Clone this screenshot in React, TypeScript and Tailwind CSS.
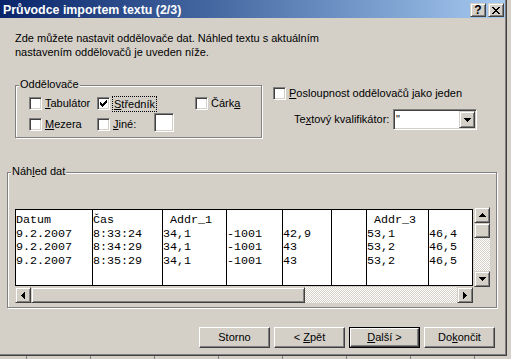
import type { ReactNode } from 'react';

// Win2000 bevels
const raised =
  'border border-t-white border-l-white border-b-[#404040] border-r-[#404040] shadow-[inset_-1px_-1px_0_#808080]';
const raisedSmall =
  'border border-t-[#d4d0c8] border-l-[#d4d0c8] border-b-[#404040] border-r-[#404040] shadow-[inset_1px_1px_0_#fff,inset_-1px_-1px_0_#808080]';
const sunken =
  'border border-t-[#808080] border-l-[#808080] border-b-white border-r-white shadow-[inset_1px_1px_0_#404040,inset_-1px_-1px_0_#d4d0c8]';
const etched = 'border border-[#808080] shadow-[inset_1px_1px_0_#fff,1px_1px_0_#fff]';
const dither =
  'bg-[image:repeating-conic-gradient(#d4d0c8_0_25%,#fff_0_50%)] bg-[length:2px_2px]';

function CheckBox({ checked }: { checked?: boolean }) {
  return (
    <span className={`box-border block h-[13px] w-[13px] shrink-0 bg-white ${sunken}`}>
      {checked && (
        <svg width="9" height="9" viewBox="0 0 9 9" className="ml-[1px] mt-[1px]" shapeRendering="crispEdges">
          <path
            fill="#000"
            d="M7 1h1v1h-1z M6 2h2v1h-2z M1 3h1v1h-1z M5 3h3v1h-3z M1 4h2v1h-2z M4 4h3v1h-3z M1 5h5v1h-5z M2 6h3v1h-3z M3 7h1v1h-1z"
          />
        </svg>
      )}
    </span>
  );
}

type Dir = 'up' | 'down' | 'left' | 'right';

function Arrow({ dir }: { dir: Dir }) {
  const vertical = dir === 'up' || dir === 'down';
  const d = {
    up: 'M3 0h1v1h1v1h1v1h1v1h-7v-1h1v-1h1v-1h1z',
    down: 'M0 0h7v1h-1v1h-1v1h-1v1h-1v-1h-1v-1h-1v-1h-1z',
    left: 'M3 0h1v7h-1v-1h-1v-1h-1v-1h-1v-1h1v-1h1v-1h1z',
    right: 'M0 0h1v1h1v1h1v1h1v1h-1v1h-1v1h-1v1h-1z',
  }[dir];
  return (
    <svg
      width={vertical ? 7 : 4}
      height={vertical ? 4 : 7}
      viewBox={vertical ? '0 0 7 4' : '0 0 4 7'}
      shapeRendering="crispEdges"
    >
      <path fill="#000" d={d} />
    </svg>
  );
}

function ArrowButton({ dir, className = '' }: { dir: Dir; className?: string }) {
  return (
    <div className={`box-border flex shrink-0 items-center justify-center bg-[#d4d0c8] ${raisedSmall} ${className}`}>
      <Arrow dir={dir} />
    </div>
  );
}

function Labeled({ children, checked, focus }: { children: ReactNode; checked?: boolean; focus?: boolean }) {
  return (
    <div className="flex h-[13px] items-center">
      <CheckBox checked={checked} />
      {focus ? (
        <span className="ml-[2px] border border-dotted border-black px-[1px] leading-[14px]">{children}</span>
      ) : (
        <span className="ml-[3px] leading-[13px]">{children}</span>
      )}
    </div>
  );
}

function PushButton({ children, primary }: { children: ReactNode; primary?: boolean }) {
  const face = (
    <div className={`box-border flex h-full w-full items-center justify-center whitespace-pre bg-[#d4d0c8] ${raised}`}>
      {children}
    </div>
  );
  return primary ? (
    <div className="box-border h-[21px] w-[71px] border border-black">{face}</div>
  ) : (
    <div className="h-[21px] w-[71px]">{face}</div>
  );
}

const COLUMNS: { w: string; rows: string[] }[] = [
  { w: 'w-[77px]', rows: ['Datum', '9.2.2007', '9.2.2007', '9.2.2007'] },
  { w: 'w-[70px]', rows: ['Čas', '8:33:24', '8:34:29', '8:35:29'] },
  { w: 'w-[64px]', rows: [' Addr_1', '34,1', '34,1', '34,1'] },
  { w: 'w-[56px]', rows: ['', '-1001', '-1001', '-1001'] },
  { w: 'w-[49px]', rows: ['', '42,9', '43', '43'] },
  { w: 'w-[35px]', rows: ['', '', '', ''] },
  { w: 'w-[62px]', rows: [' Addr_3', '53,1', '53,2', '53,2'] },
  { w: 'w-[43px]', rows: ['', '46,4', '46,5', '46,5'] },
];

function Preview() {
  return (
    <div className="grid grid-cols-[458px_16px] grid-rows-[80px_16px] gap-x-[1px]">
      {/* data table */}
      <div className="mt-[2px] box-border flex h-[77px] border border-black bg-white font-['Liberation_Mono','Courier_New',monospace] text-[11.7px] leading-[13.5px]">
        {COLUMNS.map((c, i) => (
          <div
            key={i}
            className={`${c.w} box-border h-full shrink-0 overflow-hidden pt-[4px] ${i < COLUMNS.length - 1 ? 'border-r border-black' : ''}`}
          >
            {c.rows.map((r, j) => (
              <div key={j} className="h-[13.5px] whitespace-pre">
                {r}
              </div>
            ))}
          </div>
        ))}
      </div>

      {/* vertical scrollbar */}
      <div className={`flex h-[80px] w-[16px] flex-col ${dither}`}>
        <ArrowButton dir="up" className="h-[16px] w-[16px]" />
        <div className={`box-border h-[15px] w-[16px] bg-[#d4d0c8] ${raisedSmall}`} />
        <div className="flex-1" />
        <ArrowButton dir="down" className="h-[16px] w-[16px]" />
      </div>

      {/* horizontal scrollbar */}
      <div className={`flex h-[16px] w-[458px] ${dither}`}>
        <ArrowButton dir="left" className="h-[16px] w-[16px]" />
        <div className={`box-border h-[16px] w-[274px] bg-[#d4d0c8] ${raisedSmall}`} />
        <div className="flex-1" />
        <ArrowButton dir="right" className="h-[16px] w-[16px]" />
      </div>
      <div />
    </div>
  );
}

function TitleButton({ children }: { children: ReactNode }) {
  return (
    <div className={`box-border flex h-[14px] w-[16px] items-center justify-center bg-[#d4d0c8] ${raisedSmall}`}>
      {children}
    </div>
  );
}

export default function App() {
  return (
    <div className="h-[359px] w-[511px] overflow-hidden bg-[#d4d0c8] font-['Liberation_Sans',Arial,sans-serif] text-[11px] leading-[13px] text-black">
      <div className="box-border flex h-[356px] w-[507px] flex-col border-b border-r border-[#404040] shadow-[inset_-1px_-1px_0_#808080]">
        {/* title bar */}
        <div className="flex h-[18px] w-[505px] shrink-0 items-start bg-linear-to-r from-[#0a246a] to-[#a6caf0]">
          <span className="ml-[3px] pt-[3px] text-[12.4px] font-bold leading-[15px] text-white">
            Průvodce importem textu (2/3)
          </span>
          <div className="ml-auto mr-[1px] mt-[3px] flex gap-[2px]">
            <TitleButton>
              <span className="text-[12px] font-bold leading-[12px]">?</span>
            </TitleButton>
            <TitleButton>
              <svg width="8" height="7" viewBox="0 0 8 7" shapeRendering="crispEdges">
                <path
                  fill="#000"
                  d="M0 0h2v1h-2z M6 0h2v1h-2z M1 1h2v1h-2z M5 1h2v1h-2z M2 2h4v1h-4z M3 3h2v1h-2z M2 4h4v1h-4z M1 5h2v1h-2z M5 5h2v1h-2z M0 6h2v1h-2z M6 6h2v1h-2z"
                />
              </svg>
            </TitleButton>
          </div>
        </div>

        <p className="ml-[15px] mt-[13px] leading-[14px]">
          Zde můžete nastavit oddělovače dat. Náhled textu s aktuálním
          <br />
          nastavením oddělovačů je uveden níže.
        </p>

        {/* delimiters + options */}
        <div className="mt-[26px] flex">
          <div className={`relative ml-[15px] box-border h-[53px] w-[247px] pl-[13px] pt-[11px] ${etched}`}>
            <span className="absolute left-[3px] top-[-8px] bg-[#d4d0c8] px-[1px]">Oddělovače</span>
            <div className="flex">
              <div className="w-[68px]">
                <Labeled><u>T</u>abulátor</Labeled>
              </div>
              <div className="w-[98px]">
                <Labeled checked focus><u>S</u>tředník</Labeled>
              </div>
              <Labeled>Čárk<u>a</u></Labeled>
            </div>
            <div className="mt-[8px] flex">
              <div className="w-[68px]">
                <Labeled><u>M</u>ezera</Labeled>
              </div>
              <div className="flex h-[13px] items-center">
                <Labeled><u>J</u>iné:</Labeled>
                <div className={`mb-[5px] ml-[18px] box-border h-[19px] w-[20px] bg-white ${sunken}`} />
              </div>
            </div>
          </div>

          <div className="ml-[11px] flex flex-col">
            <div className="mt-[2px]">
              <Labeled><u>P</u>osloupnost oddělovačů jako jeden</Labeled>
            </div>
            <div className="ml-[21px] mt-[9px] flex items-center">
              <span className="w-[99px] whitespace-nowrap">
                Te<u>x</u>tový kvalifikátor:
              </span>
              <div className={`box-border flex h-[21px] w-[84px] items-stretch bg-white pl-[2px] pr-[1px] py-[1px] ${sunken}`}>
                <span className="flex-1 leading-[17px]">"</span>
                <ArrowButton dir="down" className="h-[17px] w-[16px]" />
              </div>
            </div>
          </div>
        </div>

        {/* preview */}
        <div className={`relative ml-[7px] mt-[34px] box-border h-[136px] w-[490px] pl-[7px] pt-[34px] ${etched}`}>
          <span className="absolute left-[3px] top-[-8px] bg-[#d4d0c8] px-[1px]">
            Náh<u>l</u>ed dat
          </span>
          <Preview />
        </div>

        {/* wizard buttons */}
        <div className="ml-[199px] mt-[19px] flex gap-[4px]">
          <PushButton>Storno</PushButton>
          <PushButton>
            {'< '}
            <u>Z</u>pět
          </PushButton>
          <PushButton primary>
            <u>D</u>alší{' >'}
          </PushButton>
          <PushButton>
            Do<u>k</u>ončit
          </PushButton>
        </div>
      </div>

      {/* sheet grid peeking out below the dialog */}
      <div className="flex h-[3px] pl-[26px]">
        {Array.from({ length: 8 }).map((_, i) => (
          <div key={i} className="h-[3px] w-[64px] shrink-0 border-l border-[#808080]" />
        ))}
      </div>
    </div>
  );
}
